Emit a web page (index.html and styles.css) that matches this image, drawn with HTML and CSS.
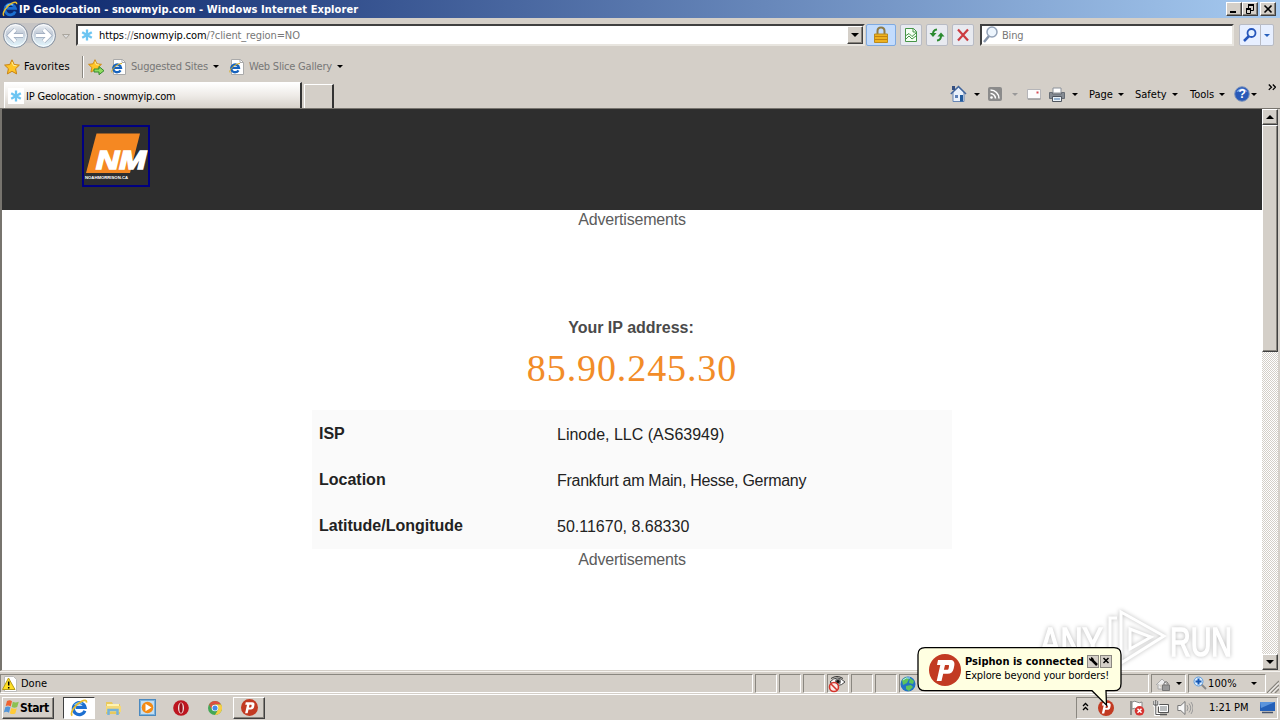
FILE: index.html
```html
<!DOCTYPE html>
<html lang="en">
<head>
    <meta charset="UTF-8">
    <meta name="viewport" content="width=device-width, initial-scale=1.0">
    <title>IP Geolocation - snowmyip.com</title>
    <link rel="stylesheet" href="styles.css">
</head>
<body>

<!-- Shared icons -->
<svg class="sprite" width="0" height="0">
    <symbol id="ie" viewBox="0 0 16 16">
        <path d="M13.2 10.4A5.3 5.3 0 1 1 13.4 7.4H5" fill="none" stroke="#1c6fd0" stroke-width="2.8"/>
        <path d="M4 5.5A5.5 5.5 0 0 1 11 4" fill="none" stroke="#7cc8f6" stroke-width="1.2"/>
        <path d="M2 14.8C-.5 12.5 4.5 5 10 2.2c3-1.6 5-1.4 4.6 1" fill="none" stroke="#e8bd2c" stroke-width="1.5"/>
    </symbol>
    <symbol id="snow" viewBox="0 0 16 16">
        <rect width="16" height="16" fill="#fff"/>
        <path d="M8 2.500v11M3.200 5.200l9.600 5.600M12.800 5.200l-9.600 5.600" stroke="#6cc5f2" stroke-width="2.300"/>
    </symbol>
    <symbol id="iepage" viewBox="0 0 16 16">
        <path d="M2.500 .5h9l3 3v12h-12z" fill="#fff" stroke="#aaa"/>
        <path d="M11 .5v3h3.500" fill="none" stroke="#aaa"/>
        <path d="M9.500 11.300A3.900 3.900 0 1 1 10 8.900H3.500" fill="none" stroke="#1763bd" stroke-width="2.300"/>
        <path d="M1 13.500C-.5 11.500 5.500 4.500 11 4.500" fill="none" stroke="#d9ae22"/>
    </symbol>
    <symbol id="star" viewBox="0 0 16 16">
        <path d="M8 .8l2.200 4.700 5.200.6-3.800 3.600 1 5.200L8 12.300 3.400 14.900l1-5.200L.6 6.100l5.200-.6z" fill="#ffc527" stroke="#c98312"/>
        <path d="M8 3l1.400 3.400 3.200.4" fill="none" stroke="#fff0a0"/>
    </symbol>
    <symbol id="psiphon" viewBox="0 0 32 32">
        <circle cx="16" cy="16" r="16" fill="#c23a22"/>
        <path d="M9 6h12c3.500 0 5 2 4.300 5.500l-.6 3C24 18 22 19.700 18.500 19.700h-4.300L12.500 27H7.700l3.600-16H8zM16 11l-1.100 4.800h3c1 0 1.500-.4 1.700-1.400l.4-2c.2-1-.1-1.400-1.100-1.400z" fill="#fff" fill-rule="evenodd"/>
    </symbol>
</svg>

<div class="title-bar">
    <svg class="title-icon" width="16" height="16"><use href="#ie"/></svg>
    <span class="title-text">IP Geolocation - snowmyip.com - Windows Internet Explorer</span>
    <div class="window-buttons">
        <span class="win-btn"><svg width="14" height="12"><path d="M3 9h6" stroke="#000" stroke-width="2"/></svg></span>
        <span class="win-btn restore"><svg width="14" height="12"><path d="M5 2h6M3 6h5" stroke="#000" stroke-width="2"/><path d="M5.500 2v3M10.500 2v5.500H8M3.500 6v4.500h4V6" fill="none" stroke="#000"/></svg></span>
        <span class="win-btn"><svg width="14" height="12"><path d="M3.500 2.500l7 7M10.500 2.500l-7 7" stroke="#000" stroke-width="1.600"/></svg></span>
    </div>
</div>

<div class="nav-bar">
    <svg class="travel" width="72" height="30" viewBox="0 0 72 30">
        <defs>
            <linearGradient id="glass" x2="0" y2="1">
                <stop offset="0" stop-color="#f2f5f9"/>
                <stop offset=".4" stop-color="#c3ccd8"/>
                <stop offset="1" stop-color="#e4f8ff"/>
            </linearGradient>
        </defs>
        <path d="M15.500 3h28v24q-14-8-28 0z" fill="#c6c4c4"/>
        <circle cx="15.500" cy="15.500" r="12" fill="url(#glass)" stroke="#858e9c"/>
        <circle cx="43.500" cy="15.500" r="12" fill="url(#glass)" stroke="#858e9c"/>
        <circle cx="15.500" cy="15.500" r="10.700" fill="none" stroke="#fff" opacity=".8"/>
        <circle cx="43.500" cy="15.500" r="10.700" fill="none" stroke="#fff" opacity=".8"/>
        <path d="M23 15.500H10M15.500 9.500l-6 6 6 6" fill="none" stroke="#9aa8bc" stroke-width="4.500"/>
        <path d="M36 15.500h13M43.500 9.500l6 6-6 6" fill="none" stroke="#9aa8bc" stroke-width="4.500"/>
        <path d="M23 15.500H10M15.500 9.500l-6 6 6 6" fill="none" stroke="#fff" stroke-width="3.200"/>
        <path d="M36 15.500h13M43.500 9.500l6 6-6 6" fill="none" stroke="#fff" stroke-width="3.200"/>
        <path d="M62.500 14.500h7l-3.500 4z" fill="#ddd" stroke="#aaa69e"/>
    </svg>
    <div class="address">
        <svg width="16" height="16"><use href="#snow"/></svg>
        <span class="url"><b>https</b>://<b>snowmyip.com</b>/?client_region=NO</span>
        <span class="drop-btn"><i class="caret large"></i></span>
    </div>
    <div class="tool lock">
        <svg width="16" height="18" viewBox="0 0 16 18"><path d="M4.500 8V5q0-3.500 3.500-3.500T11.500 5v3" fill="none" stroke="#8e7b48" stroke-width="2"/><path d="M1.500 8h13v8.500h-13z" fill="#eeb220" stroke="#b98a20"/><path d="M2 10.500h12M2 13.500h12" stroke="#c18211"/></svg>
    </div>
    <div class="tool">
        <svg width="16" height="16" viewBox="0 0 16 16"><path d="M2.500 1.500h8l3 3v10h-11z" fill="#f5fff3" stroke="#469447"/><path d="M10 1.500v3.500h3.500M3 8.500l3-2 3 3 4-3.500M3 12l3-3 3 3 4-3" fill="none" stroke="#469447"/></svg>
    </div>
    <div class="tool">
        <svg width="16" height="16" viewBox="0 0 16 16"><path d="M8 2.500Q4 3 4 7M8 13.500Q12 13 12 9" fill="none" stroke="#2b8a2f" stroke-width="2"/><path d="M.5 6h7L4 10zM8.500 9.500h7L12 5.500z" fill="#2b8a2f"/></svg>
    </div>
    <div class="tool">
        <svg width="16" height="16" viewBox="0 0 16 16"><path d="M3 2.500l10 11M13 2.500l-10 11" stroke="#cc3b40" stroke-width="2.200"/></svg>
    </div>
    <div class="search">
        <svg width="18" height="18" viewBox="0 0 18 18"><path d="M2 16l5-6" stroke="#8795aa" stroke-width="2.500"/><circle cx="10" cy="6" r="5" fill="#edf5fd" stroke="#93a2b8" stroke-width="1.500"/></svg>
        <span>Bing</span>
    </div>
    <div class="tool search-go">
        <svg width="16" height="16" viewBox="0 0 16 16"><path d="M2 14l5-5" stroke="#2656bb" stroke-width="2.500"/><circle cx="9.500" cy="6" r="4" fill="#e5f1ff" stroke="#2656bb" stroke-width="1.800"/></svg>
    </div>
    <div class="tool search-drop"><i class="caret blue"></i></div>
</div>

<div class="favorites-bar">
    <svg width="16" height="16"><use href="#star"/></svg>
    <span class="fav-label">Favorites</span>
    <i class="divider"></i>
    <svg class="add-fav" width="17" height="16" viewBox="0 0 17 16"><use href="#star" width="14" height="14"/><path d="M6 10h5V7.500l5 4.200-5 4V13H6z" fill="#8fdc60" stroke="#348a2d"/></svg>
    <svg class="site-icon" width="16" height="16"><use href="#iepage"/></svg>
    <span class="suggested">Suggested Sites</span><i class="caret"></i>
    <svg class="slice-icon" width="16" height="16"><use href="#iepage"/></svg>
    <span class="slice">Web Slice Gallery</span><i class="caret"></i>
</div>

<div class="tab-bar">
    <div class="tab">
        <svg width="16" height="16"><use href="#snow"/></svg>
        <span>IP Geolocation - snowmyip.com</span>
    </div>
    <div class="new-tab"></div>
    <div class="commands">
        <svg class="home" width="17" height="18" viewBox="0 0 17 18"><path d="M3 7v9.500h11V7L8.500 2z" fill="#e9f1fb" stroke="#6685b5"/><path d="M.8 9L8.500 1.500 16 9" fill="none" stroke="#40649b" stroke-width="1.500"/><path d="M2 1h3v4H2z" fill="#344f81"/><path d="M5 10h3v3H5z" fill="#5d81b8"/><path d="M10 10h3v6.500h-3z" fill="#215a9c"/></svg>
        <i class="caret"></i>
        <svg class="rss" width="14" height="14" viewBox="0 0 14 14"><rect width="14" height="14" rx="2" fill="#8b8b8b"/><circle cx="3.500" cy="10.500" r="1.300" fill="#fff"/><path d="M2.500 6.500a5 5 0 0 1 5 5M2.500 3a8.500 8.500 0 0 1 8.500 8.500" fill="none" stroke="#fff" stroke-width="1.500"/></svg>
        <i class="caret dim"></i>
        <svg class="mail" width="14" height="11" viewBox="0 0 14 11"><path d="M.5.5h13v9.500H.5z" fill="#fcfcfc" stroke="#b5b5b8"/><path d="M9.500 2.500h2v2h-2z" fill="#d64a53"/><path d="M1 10h12.500" stroke="#888"/></svg>
        <svg class="printer" width="16" height="15" viewBox="0 0 16 15"><path d="M4 1h8v5H4z" fill="#fff" stroke="#8a9099"/><path d="M.5 5.500h3V7h9V5.500h3v6H.5z" fill="#858b93" stroke="#666c74"/><path d="M3.500 9.500h9v5h-9z" fill="#eaf2f8" stroke="#50565f"/><path d="M5 12h6" stroke="#4878ad"/></svg>
        <i class="caret"></i>
        <span class="cmd page-cmd">Page</span><i class="caret"></i>
        <span class="cmd safety-cmd">Safety</span><i class="caret"></i>
        <span class="cmd tools-cmd">Tools</span><i class="caret"></i>
        <svg class="help" width="16" height="16" viewBox="0 0 16 16"><circle cx="8" cy="8" r="7.300" fill="#2859b8" stroke="#7d94bb"/><path d="M2.500 6a6 6 0 0 1 11 0q-5-2-11 0z" fill="#87abea"/><text class="help-mark" x="8" y="12.200">?</text></svg>
        <i class="caret"></i>
        <svg class="chevrons" width="8" height="7" viewBox="0 0 8 7"><path d="M.8.5l2.700 2.700L.8 5.900M4.800.5l2.700 2.700-2.700 2.700" fill="none" stroke="#000" stroke-width="1.300"/></svg>
    </div>
</div>

<div class="viewport">
    <main class="page">
        <header class="site-header">
            <a class="logo">
                <svg width="64" height="57" viewBox="0 0 64 57">
                    <path d="M12.500 6.500H56L46 46H2z" fill="#f58822"/>
                    <text class="logo-nm" x="12" y="42" textLength="50" lengthAdjust="spacingAndGlyphs">NM</text>
                    <text class="logo-name" x="1" y="51.500" textLength="43" lengthAdjust="spacingAndGlyphs">NOAHMORRISON.CA</text>
                </svg>
            </a>
        </header>
        <p class="ad">Advertisements</p>
        <h2 class="ip-label">Your IP address:</h2>
        <div class="ip">85.90.245.30</div>
        <dl class="details">
            <dt>ISP</dt><dd>Linode, LLC (AS63949)</dd>
            <dt>Location</dt><dd class="place">Frankfurt am Main, Hesse, Germany</dd>
            <dt>Latitude/Longitude</dt><dd>50.11670, 8.68330</dd>
        </dl>
        <p class="ad">Advertisements</p>
    </main>
    <div class="scrollbar">
        <span class="scroll-btn"><i class="caret up"></i></span>
        <span class="thumb"></span>
        <span class="track"></span>
        <span class="scroll-btn"><i class="caret large"></i></span>
    </div>
</div>

<div class="status-bar">
    <div class="status-main">
        <svg width="16" height="16" viewBox="0 0 16 16"><path d="M2.500.5h9l3 3v12h-12z" fill="#fff" stroke="#bbb"/><path d="M6.500 2L13 13.500H.5z" fill="#ffdf24" stroke="#b59b15"/><path d="M6.700 5.500v4M6.700 11v1.500" stroke="#000" stroke-width="1.500"/></svg>
        <span>Done</span>
    </div>
    <div class="pane"></div>
    <div class="pane"></div>
    <div class="pane"></div>
    <div class="pane">
        <svg width="18" height="18" viewBox="0 0 18 18"><path d="M2 7q7-8 15 0-7 7-15 0z" fill="#fff" stroke="#444"/><path d="M3 3.500q6-4 12 0" fill="none" stroke="#333"/><circle cx="10" cy="6.500" r="3" fill="#777"/><circle cx="10" cy="6.500" r="1.600" fill="#111"/><circle cx="6" cy="12" r="4.500" fill="#fbe9e7" stroke="#d4342c" stroke-width="1.600"/><path d="M3 9l6 6" stroke="#d4342c" stroke-width="1.600"/></svg>
    </div>
    <div class="pane"></div>
    <div class="pane"></div>
    <div class="zone">
        <svg width="16" height="16" viewBox="0 0 16 16"><circle cx="8" cy="8" r="7.500" fill="#2273c5"/><path d="M2 4l4-3 3 2-2 4-4 2zM10 2l4 3-1 3-4-1zM6 10l5-1 2 2-4 4-3-2z" fill="#5fc35b"/><path d="M3 4q3-3 7-2" fill="none" stroke="#b2ecff"/></svg>
    </div>
    <div class="protected">
        <svg width="16" height="16" viewBox="0 0 16 16"><path d="M1 9L7 3l5 5M3 8v5h4" fill="#eee" stroke="#aaa"/><path d="M9 9V7q2-3 4 0v2" fill="none" stroke="#777"/><path d="M7.500 9h7v5.500h-7z" fill="#999" stroke="#777"/></svg>
        <i class="caret"></i>
    </div>
    <div class="zoom">
        <svg width="15" height="15" viewBox="0 0 15 15"><path d="M8 8l5 5" stroke="#888" stroke-width="1.800"/><circle cx="5.500" cy="5.500" r="4.500" fill="#d8ecff" stroke="#5e9bdc"/><path d="M5.500 2.500v6M2.500 5.500h6" stroke="#1456b3" stroke-width="2"/></svg>
        <span>100%</span>
        <i class="caret"></i>
    </div>
    <svg class="grip" width="12" height="14" viewBox="0 0 12 14"><path d="M0 14L12 2M4 14l8-8M8 14l4-4" stroke="#88857e" stroke-width="1.300"/><path d="M1.500 14L12 3.500M5.500 14L12 7.500" stroke="#fff"/></svg>
</div>

<div class="taskbar">
    <div class="start">
        <svg width="17" height="17" viewBox="0 0 17 17"><path d="M4 2q3-1.500 5 .2L7.700 7.500Q5.500 6 2.700 7z" fill="#ef622f"/><path d="M9.800 2.800q2.500 1.500 6 0l-1.600 5.300q-3 1.200-5.500-.2z" fill="#8cc152"/><path d="M2.400 8q3-1.200 5 .3L6 13.800Q3.500 12 .8 13.400z" fill="#5295d8"/><path d="M8.300 9q3 1.400 5.500.2l-1.500 5.300q-3 1.300-5.500-.3z" fill="#ffcb37"/></svg>
        <b>Start</b>
    </div>
    <div class="task active"><svg width="18" height="18"><use href="#ie"/></svg></div>
    <div class="task">
        <svg width="17" height="17" viewBox="0 0 17 17"><path d="M1 3h6l1 2h7v10H1z" fill="#e9c95d"/><path d="M2 5h12v6H2z" fill="#fff3b0"/><path d="M1 7h15v6H1z" fill="#f4d979"/><path d="M3.500 16v-5h9v5" fill="none" stroke="#75b2da" stroke-width="2.500"/></svg>
    </div>
    <div class="task">
        <svg width="17" height="17" viewBox="0 0 17 17"><rect x=".5" y=".5" width="16" height="16" fill="#7ab2dd" stroke="#4b89bf"/><path d="M2 2h13v13H2z" fill="#c4def2"/><circle cx="8.500" cy="8.500" r="5.800" fill="#f48b15"/><path d="M6.500 4.800l6 3.700-6 3.700z" fill="#fff"/></svg>
    </div>
    <div class="task">
        <svg width="16" height="16" viewBox="0 0 16 16"><circle cx="8" cy="8" r="7.800" fill="#bd1620"/><ellipse cx="8" cy="8" rx="3" ry="5.600" fill="#f4e9e9"/><ellipse cx="8" cy="8" rx="1.700" ry="4.900" fill="#9b101a"/></svg>
    </div>
    <div class="task">
        <svg width="14" height="14" viewBox="0 0 16 16"><circle cx="8" cy="8" r="8" fill="#44a755"/><path d="M1.100 4A8 8 0 0 1 15 4H8z" fill="#df4d3f"/><path d="M1.100 4L5 10l3-6" fill="#df4d3f"/><path d="M15 4a8 8 0 0 1-7 12l4-7-4-5z" fill="#f7ce45"/><circle cx="8" cy="8" r="3.800" fill="#fff"/><circle cx="8" cy="8" r="2.900" fill="#4389eb"/></svg>
    </div>
    <div class="task raised"><svg width="17" height="17"><use href="#psiphon"/></svg></div>
    <div class="tray">
        <svg class="tray-chevrons" width="7" height="9" viewBox="0 0 7 9"><path d="M1 4l2.500-2.500L6 4M1 8l2.500-2.500L6 8" fill="none" stroke="#000" stroke-width="1.300"/></svg>
        <svg class="tray-psiphon" width="16" height="16"><use href="#psiphon"/></svg>
        <svg class="tray-flag" width="16" height="16" viewBox="0 0 16 16"><path d="M2 1v14" stroke="#777" stroke-width="1.500"/><path d="M3 2q3-1.500 5 0t5 0v7q-3 1.500-5 0T3 9z" fill="#fff" stroke="#888"/><circle cx="10.500" cy="10.800" r="4.800" fill="#d73431"/><path d="M8.500 8.800l4 4M12.500 8.800l-4 4" stroke="#fff" stroke-width="1.500"/></svg>
        <svg class="tray-net" width="16" height="16" viewBox="0 0 16 16"><path d="M5.500 4.500h10v8h-10z" fill="#b9bcbe" stroke="#555"/><path d="M6.500 5.500h8v6h-8z" fill="none" stroke="#fff"/><path d="M7 14.500h7" stroke="#555" stroke-width="1.500"/><path d="M.8 1v4h4V1M2.800 5v9.500H7" fill="none" stroke="#fff" stroke-width="3"/><path d="M.8 1v4h4V1M2.800 0v14.500H7" fill="none" stroke="#555"/></svg>
        <svg class="tray-sound" width="16" height="16" viewBox="0 0 16 16"><path d="M.8 5.500h3L8 1.500v13l-4.200-4h-3z" fill="#f8f8f8" stroke="#777"/><path d="M10 5q2 3 0 6M12 3.500q3.500 4.500 0 9M14 2q4 6 0 12" fill="none" stroke="#999"/></svg>
        <span class="clock">1:21 PM</span>
        <svg class="tray-desktop" width="15" height="14" viewBox="0 0 15 14"><path d="M0 1h15v9H0z" fill="#2460b8"/><path d="M0 1h15L1 7z" fill="#5b94dc"/><path d="M2 11.500h11" stroke="#46536c" stroke-width="1.500"/></svg>
    </div>
</div>

<svg class="watermark" width="210" height="62" viewBox="0 0 210 62">
    <text x="4" y="50" textLength="63" lengthAdjust="spacingAndGlyphs">ANY</text>
    <path d="M81 12h-7v34M85 6l43 24-43 27z"/>
    <path d="M94 23v20l21-12z"/>
    <text x="134" y="50" textLength="62" lengthAdjust="spacingAndGlyphs">RUN</text>
</svg>

<div class="balloon">
    <svg class="balloon-shape" width="206" height="60" viewBox="0 0 206 60"><path d="M8 .7h189q7 0 7 7v29q0 7-7 7h-8l.5 14.500L175 43.700H8q-7 0-7-7v-29q0-7 7-7z" fill="#ffffe1" stroke="#000" stroke-width="1.300"/></svg>
    <svg class="balloon-icon" width="32" height="32"><use href="#psiphon"/></svg>
    <div class="balloon-text">
        <div class="balloon-title">
            <b>Psiphon is connected</b>
            <span class="mini"><svg width="10" height="10" viewBox="0 0 10 10"><path d="M3 3l6 6" stroke="#000" stroke-width="2.500"/><path d="M1 2q0 3 3 3t1-3L3 1v2z" fill="#000"/></svg></span>
            <span class="mini"><svg width="10" height="10" viewBox="0 0 10 10"><path d="M2.500 2l5 5M7.500 2l-5 5" stroke="#000" stroke-width="1.500"/></svg></span>
        </div>
        <span class="balloon-message">Explore beyond your borders!</span>
    </div>
</div>

</body>
</html>
```
FILE: styles.css
```css
* {
    box-sizing: border-box;
}

body {
    margin: 0;
    width: 1280px;
    height: 720px;
    overflow: hidden;
    position: relative;
    display: flex;
    flex-direction: column;
    background-color: #d4cfc8;
    color: #000;
    font: 11px "DejaVu Sans Condensed", "DejaVu Sans", sans-serif;
    font-stretch: condensed;
    letter-spacing: -0.2px;
    white-space: nowrap;
}

svg {
    display: block;
    flex-shrink: 0;
}

.sprite {
    position: absolute;
}

/* Small drop-down arrow */
.caret {
    flex-shrink: 0;
    width: 0;
    height: 0;
    border: 3px solid transparent;
    border-top-color: #000;
    border-bottom: 0;
}

.caret.blue {
    border-top-color: #2861bd;
}

.caret.dim {
    border-top-color: #999;
}

.caret.large {
    border-width: 4px 4px 0;
}

.caret.up {
    border: 4px solid transparent;
    border-bottom-color: #000;
    border-top: 0;
}

/* Title bar */
.title-bar {
    height: 18px;
    flex-shrink: 0;
    display: flex;
    align-items: center;
    padding: 0 4px 0 2px;
    background: linear-gradient(90deg, #0a246a, #a6caf0);
    color: #fff;
}

.title-text {
    margin-left: 1px;
    font-weight: bold;
    letter-spacing: 0.07px;
}

.window-buttons {
    display: flex;
    margin-left: auto;
}

.win-btn, .scroll-btn, .drop-btn, .thumb {
    background-color: #d4cfc8;
    border: 1px solid;
    border-color: #fff #404040 #404040 #fff;
    box-shadow: inset -1px -1px #87837c;
}

.win-btn {
    width: 16px;
    height: 14px;
}

.restore {
    margin-right: 2px;
}

/* Address row */
.nav-bar {
    height: 35px;
    flex-shrink: 0;
    display: flex;
    align-items: center;
    padding-bottom: 1px;
}

.travel {
    margin-right: 4px;
}

.address, .search {
    height: 22px;
    display: flex;
    align-items: center;
    background-color: #fff;
    border: 2px solid;
    border-color: #404040 #e8e5df #e8e5df #404040;
}

.address {
    width: 789px;
    padding-left: 1px;
}

.url {
    margin: 1px 0 0 4px;
    color: #777;
    letter-spacing: -0.12px;
}

.url b {
    font-weight: normal;
    color: #000;
}

.drop-btn {
    width: 16px;
    height: 18px;
    margin-left: auto;
    display: flex;
    align-items: center;
    justify-content: center;
}

.tool {
    width: 22px;
    height: 22px;
    margin-left: 4px;
    display: flex;
    align-items: center;
    justify-content: center;
    background-color: #e8eaf0;
    border: 1px solid #b8bbc4;
    border-radius: 2px;
}

.lock {
    width: 30px;
    margin-left: 1px;
    background-color: #c3dcfd;
    border-color: #7faae0;
}

.search {
    width: 254px;
    margin-left: 6px;
    color: #777;
}

.search span {
    margin: 1px 0 0 2px;
}

.search-go {
    margin-left: 5px;
    background-color: #e7efff;
    border-radius: 2px 0 0 2px;
}

.search-drop {
    width: 14px;
    margin-left: -1px;
    background-color: #e7efff;
    border-radius: 0 2px 2px 0;
}

/* Favorites row */
.favorites-bar {
    height: 28px;
    flex-shrink: 0;
    display: flex;
    align-items: center;
    padding: 0 0 1px 4px;
    color: #777;
}

.fav-label {
    width: 48px;
    margin-left: 4px;
    color: #000;
    letter-spacing: 0.12px;
}

.divider {
    width: 2px;
    height: 22px;
    margin: 0 4px 0 10px;
    border-left: 1px solid #8a8780;
    border-right: 1px solid #fff;
}

.site-icon {
    margin-left: 6px;
}

.suggested {
    width: 78px;
    margin: 0 4px 0 4px;
}

.slice-icon {
    margin-left: 10px;
}

.slice {
    width: 83px;
    margin: 0 5px 0 4px;
}

/* Tabs and command buttons */
.tab-bar {
    height: 28px;
    flex-shrink: 0;
    display: flex;
    align-items: flex-end;
    padding-left: 4px;
    border-bottom: 1px solid #77746e;
}

.tab {
    width: 298px;
    height: 26px;
    display: flex;
    align-items: center;
    padding: 1px 0 0 3px;
    background: linear-gradient(#fff, #eeebe7 50%, #d7d2cb);
    border: 1px solid #fff;
    border-right: 2px solid #333;
    border-bottom: 0;
}

.tab span {
    margin-left: 2px;
}

.new-tab {
    width: 30px;
    height: 24px;
    margin-left: 2px;
    border: 1px solid #fff;
    border-right: 2px solid #333;
    border-bottom: 0;
}

.commands {
    width: 330px;
    height: 28px;
    margin-left: auto;
    display: flex;
    align-items: center;
}

.commands > .home + .caret {
    margin-left: 7px;
}

.rss {
    margin: 0 10px 0 8px;
}

.mail {
    margin: 0 8px 0 9px;
}

.printer {
    margin-right: 7px;
}

.cmd {
    margin-right: 4px;
    letter-spacing: 0;
}

.page-cmd {
    width: 25px;
    margin-left: 11px;
}

.safety-cmd {
    width: 33px;
    margin-left: 11px;
}

.tools-cmd {
    width: 25px;
    margin-left: 12px;
}

.help {
    margin: 0 1px 0 9px;
}

.help-mark {
    font: bold 12px "Liberation Sans", sans-serif;
    fill: #fff;
    text-anchor: middle;
}

.chevrons {
    margin: 0 4px 13px auto;
}

/* Web page */
.viewport {
    height: 562px;
    flex-shrink: 0;
    display: flex;
    border-left: 2px solid #77746e;
    border-bottom: 1px solid #d4cfc8;
}

.page {
    width: 1260px;
    background-color: #fff;
    font: 16px "Liberation Sans", Arial, sans-serif;
    font-stretch: normal;
    letter-spacing: 0;
}

.site-header {
    height: 101px;
    padding: 16px 80px;
    background-color: #2e2e2e;
}

.logo {
    display: block;
    width: 68px;
    height: 62px;
    border: 2px solid #000080;
}

.logo-nm {
    font: italic bold 25px "Liberation Sans", Arial, sans-serif;
    fill: #fff;
    stroke: #fff;
    stroke-width: 1.5px;
}

.logo-name {
    font: bold 4px "Liberation Sans", Arial, sans-serif;
    fill: #fff;
}

.ad {
    height: 20px;
    margin: 0;
    line-height: 20px;
    text-align: center;
    letter-spacing: -0.2px;
    color: #5c5c5c;
}

.details + .ad {
    padding-top: 1px;
}

.ip-label {
    margin: 88px 2px 0 0;
    font-size: 16px;
    line-height: 20px;
    text-align: center;
    color: #4a4a4a;
}

.ip {
    margin-top: 7px;
    height: 46px;
    font: 38px "Liberation Serif", serif;
    line-height: 46px;
    letter-spacing: 0.9px;
    text-align: center;
    color: #f28c28;
}

.details {
    width: 640px;
    height: 139px;
    margin: 19px auto 0;
    padding: 1px 0 0 7px;
    display: grid;
    grid-template-columns: 238px 1fr;
    grid-template-rows: repeat(3, 46px);
    line-height: 46px;
    background-color: #fafafa;
    color: #222;
}

.details dt {
    font-weight: bold;
}

.details dd {
    margin: 0;
    padding-top: 1px;
}

.details .place {
    letter-spacing: -0.29px;
}

.scrollbar {
    width: 16px;
    display: flex;
    flex-direction: column;
}

.scroll-btn {
    height: 16px;
    display: flex;
    align-items: center;
    justify-content: center;
}

.thumb {
    height: 227px;
}

.track {
    flex-grow: 1;
    background: repeating-conic-gradient(#fff 0 25%, #d4cfc8 0 50%) 0 0 / 2px 2px;
}

/* Status bar */
.status-bar {
    height: 23px;
    flex-shrink: 0;
    display: flex;
    padding-top: 2px;
    border-top: 1px solid #f5f3ef;
}

.status-main, .pane, .zone, .protected, .zoom {
    height: 19px;
    display: flex;
    align-items: center;
    border: 1px solid;
    border-color: #8a8780 #fff #fff #8a8780;
    margin-right: 2px;
}

.status-main {
    width: 753px;
    padding-left: 1px;
}

.status-main span {
    margin-left: 3px;
    letter-spacing: 0;
}

.pane {
    width: 22px;
}

.zone {
    width: 250px;
}

.protected {
    width: 35px;
    padding-left: 3px;
    gap: 5px;
}

.zoom {
    width: 78px;
    padding-left: 4px;
}

.zoom span {
    letter-spacing: 0.1px;
}

.zoom .caret {
    margin-left: auto;
    margin-right: 8px;
}

.grip {
    margin: 5px 0 0 -1px;
}

/* Taskbar */
.taskbar {
    height: 26px;
    display: flex;
    align-items: center;
    padding-left: 2px;
    border-top: 1px solid #fff;
}

.start {
    width: 52px;
    height: 22px;
    display: flex;
    align-items: center;
    border: 1px solid;
    border-color: #fff #404040 #404040 #fff;
    box-shadow: inset -1px -1px #87837c;
}

.start b {
    font-size: 12px;
    letter-spacing: -0.4px;
}

.task {
    width: 32px;
    height: 22px;
    margin-left: 2px;
    display: flex;
    align-items: center;
    justify-content: center;
}

.active {
    margin-left: 9px;
    border: 1px solid;
    border-color: #404040 #fff #fff #404040;
    background-color: #fff;
}

.raised {
    border: 1px solid;
    border-color: #fff #404040 #404040 #fff;
    box-shadow: inset -1px -1px #87837c;
}

.tray {
    width: 202px;
    height: 22px;
    margin: 0 2px 0 auto;
    display: flex;
    align-items: center;
    padding-left: 5px;
    border: 1px solid;
    border-color: #8a8780 #fff #fff #8a8780;
}

.tray-chevrons {
    margin-bottom: 3px;
}

.tray-psiphon {
    margin-left: 9px;
}

.tray-flag {
    margin-left: 15px;
}

.tray-net, .tray-sound {
    margin-left: 8px;
}

.clock {
    width: 40px;
    margin-left: 16px;
    letter-spacing: -0.05px;
}

.tray-desktop {
    margin-left: 11px;
}

/* Overlays above the desktop */
.watermark {
    position: absolute;
    left: 1036px;
    top: 606px;
    overflow: visible;
    fill: none;
    stroke: #fff;
    stroke-width: 3px;
    filter: drop-shadow(0 0 2px rgba(0, 0, 0, 0.28));
}

.watermark text {
    font: 40px "Liberation Sans Narrow", "Liberation Sans", Arial, sans-serif;
    letter-spacing: 0;
    fill: #fff;
    stroke-width: 1.5px;
}

.balloon {
    position: absolute;
    left: 917px;
    top: 647px;
    width: 206px;
    height: 60px;
    display: flex;
    padding: 7px 0 0 12px;
}

.balloon-shape {
    position: absolute;
    left: 0;
    top: 0;
}

.balloon-icon {
    position: relative;
}

.balloon-text {
    position: relative;
    margin-left: 4px;
}

.balloon-title {
    height: 14px;
    display: flex;
    align-items: center;
    gap: 1px;
}

.balloon-title b {
    width: 121px;
    letter-spacing: 0.02px;
}

.mini {
    width: 12px;
    height: 13px;
    display: flex;
    align-items: center;
    justify-content: center;
    background-color: #d4cfc8;
    border: 1px solid #8a8780;
}

.balloon-message {
    display: block;
    line-height: 15px;
    letter-spacing: -0.12px;
}
```
